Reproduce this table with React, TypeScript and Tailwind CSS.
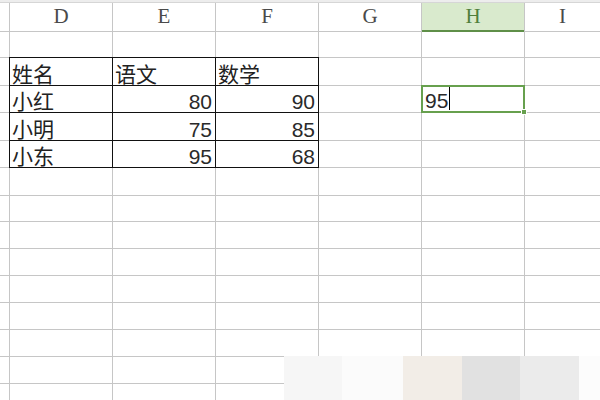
import React from "react";

const cols = ["", "D", "E", "F", "G", "H", "I"];

const rows = [
  { name: "姓名", a: "语文", b: "数学", head: true },
  { name: "小红", a: "80", b: "90" },
  { name: "小明", a: "75", b: "85" },
  { name: "小东", a: "95", b: "68" },
];

const cjk = "font-['Noto_Sans_CJK_SC',sans-serif]";
const num = "font-['Liberation_Sans',Arial,sans-serif]";

const App = () => {
  // 7 cols x 15 rows = 105, minus header 7, table 12, selected 1
  const blanks = Array.from({ length: 85 });

  return (
    <div className="h-[400px] w-[600px] overflow-hidden bg-white relative">
      <div className="h-[2px] bg-[#ededed]" />
      <div className="grid grid-cols-[9px_102px_102px_102px_102px_102px_1fr] grid-rows-[28px_25px_27px_26px_27px_26px_27px_25px_26px_26px_26px_26px_26px_26px_26px] gap-px border-t border-[#d6d6d6] bg-[#c6c6c6]">
        {cols.map((c, i) =>
          c === "H" ? (
            <div
              key={c}
              style={{ gridColumnStart: i + 1, gridRowStart: 1 }}
              className="flex items-center justify-center -mb-px border-b-2 border-[#5f8f48] bg-[#d9eacd] font-['Liberation_Serif',serif] text-[21px] text-[#4f7f3b]"
            >
              {c}
            </div>
          ) : (
            <div
              key={c || "c"}
              style={{ gridColumnStart: i + 1, gridRowStart: 1 }}
              className="flex items-center justify-center bg-white font-['Liberation_Serif',serif] text-[21px] text-[#4a4a4a]"
            >
              {c}
            </div>
          )
        )}

        {/* data table with black borders */}
        <div className="col-start-2 col-span-3 row-start-3 row-span-4 -m-px grid grid-cols-[102px_102px_102px] grid-rows-[27px_26px_27px_26px] gap-px bg-[#111] p-px">
          {rows.map((r) => (
            <React.Fragment key={r.name}>
              <div className={`flex items-end bg-white pl-[2px] pb-[1px] text-[21px] leading-none text-[#222] ${cjk}`}>
                {r.name}
              </div>
              {r.head ? (
                <>
                  <div className={`flex items-end bg-white pl-[2px] pb-[1px] text-[21px] leading-none text-[#222] ${cjk}`}>
                    {r.a}
                  </div>
                  <div className={`flex items-end bg-white pl-[2px] pb-[1px] text-[21px] leading-none text-[#222] ${cjk}`}>
                    {r.b}
                  </div>
                </>
              ) : (
                <>
                  <div className={`flex items-end justify-end bg-white pr-[3px] text-[21px] leading-none text-[#2a2a2a] ${num}`}>
                    {r.a}
                  </div>
                  <div className={`flex items-end justify-end bg-white pr-[3px] text-[21px] leading-none text-[#2a2a2a] ${num}`}>
                    {r.b}
                  </div>
                </>
              )}
            </React.Fragment>
          ))}
        </div>

        {/* active cell H */}
        <div className="col-start-6 row-start-4 relative z-10 -m-px flex items-end border-2 border-[#67a04e] bg-white pl-[2px]">
          <span className={`text-[21px] leading-none text-[#2a2a2a] ${num}`}>95</span>
          <span className="mb-[1px] ml-px h-[23px] w-px bg-black" />
          <span className="absolute -bottom-[4px] -right-[4px] h-[6px] w-[6px] border border-white bg-[#67a04e]" />
        </div>

        {blanks.map((_, i) => (
          <div key={i} className="bg-white" />
        ))}
      </div>

      {/* blurred blocks over the lower right */}
      <div className="absolute bottom-0 left-[284px] flex h-[44px] w-[316px]">
        <div className="w-[58px] bg-[#f6f6f6]" />
        <div className="w-[61px] bg-[#fbfbfb]" />
        <div className="w-[59px] bg-[#f2ede7]" />
        <div className="w-[58px] bg-[#e1e1e1]" />
        <div className="w-[59px] bg-[#ebebeb]" />
        <div className="flex-1 bg-[#fcfcfc]" />
      </div>
    </div>
  );
};

export default App;
